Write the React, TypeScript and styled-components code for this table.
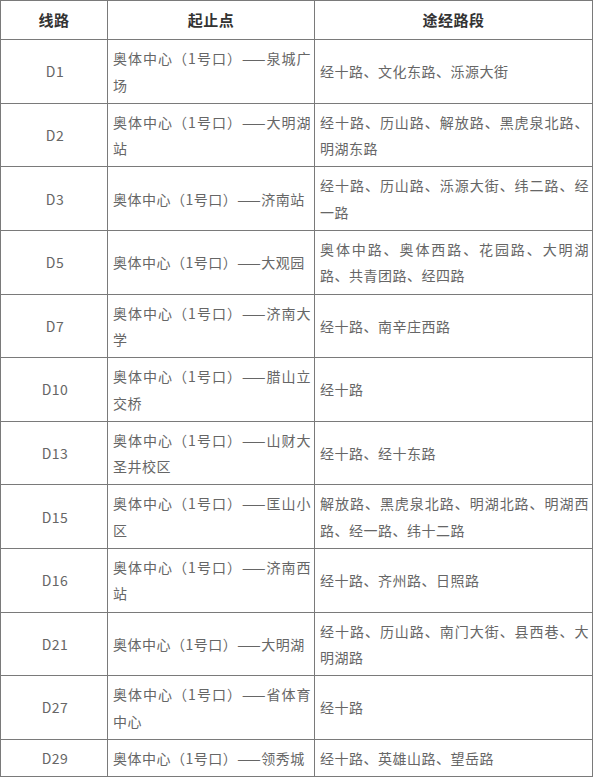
import { createGlobalStyle, styled } from "styled-components";

const GlobalStyle = createGlobalStyle`
  html, body {
    margin: 0;
    padding: 0;
    background: #ffffff;
  }
  body {
    font-family: "Noto Sans CJK SC", "Noto Sans", sans-serif;
  }
`;

const Table = styled.table`
  width: 592px;
  border-collapse: collapse;
  table-layout: fixed;
  font-size: 14px;
  letter-spacing: 0.5px;
  color: #666666;
`;

const HeadCell = styled.th`
  border: 1px solid #7a7a7a;
  padding: 6px 5px;
  line-height: 26.3px;
  font-size: 15px;
  font-weight: bold;
  color: #333333;
  text-align: center;
`;

const Cell = styled.td<{ $center?: boolean }>`
  border: 1px solid #7a7a7a;
  padding: 5px 3px 5px 5px;
  line-height: 26.3px;
  vertical-align: middle;
  text-align: ${(props) => (props.$center ? "center" : "justify")};
  word-break: break-all;
`;

interface IRoute {
  line: string;
  ends: string;
  via: string;
}

const routes: IRoute[] = [
  { line: "D1", ends: "奥体中心（1号口）——泉城广场", via: "经十路、文化东路、泺源大街" },
  { line: "D2", ends: "奥体中心（1号口）——大明湖站", via: "经十路、历山路、解放路、黑虎泉北路、明湖东路" },
  { line: "D3", ends: "奥体中心（1号口）——济南站", via: "经十路、历山路、泺源大街、纬二路、经一路" },
  { line: "D5", ends: "奥体中心（1号口）——大观园", via: "奥体中路、奥体西路、花园路、大明湖路、共青团路、经四路" },
  { line: "D7", ends: "奥体中心（1号口）——济南大学", via: "经十路、南辛庄西路" },
  { line: "D10", ends: "奥体中心（1号口）——腊山立交桥", via: "经十路" },
  { line: "D13", ends: "奥体中心（1号口）——山财大圣井校区", via: "经十路、经十东路" },
  { line: "D15", ends: "奥体中心（1号口）——匡山小区", via: "解放路、黑虎泉北路、明湖北路、明湖西路、经一路、纬十二路" },
  { line: "D16", ends: "奥体中心（1号口）——济南西站", via: "经十路、齐州路、日照路" },
  { line: "D21", ends: "奥体中心（1号口）——大明湖", via: "经十路、历山路、南门大街、县西巷、大明湖路" },
  { line: "D27", ends: "奥体中心（1号口）——省体育中心", via: "经十路" },
  { line: "D29", ends: "奥体中心（1号口）——领秀城", via: "经十路、英雄山路、望岳路" },
];

function App() {
  return (
    <>
      <GlobalStyle />
      <Table>
        <colgroup>
          <col style={{ width: 107 }} />
          <col style={{ width: 207 }} />
          <col style={{ width: 278 }} />
        </colgroup>
        <thead>
          <tr>
            <HeadCell>线路</HeadCell>
            <HeadCell>起止点</HeadCell>
            <HeadCell>途经路段</HeadCell>
          </tr>
        </thead>
        <tbody>
          {routes.map((route) => (
            <tr key={route.line}>
              <Cell $center>{route.line}</Cell>
              <Cell>{route.ends}</Cell>
              <Cell>{route.via}</Cell>
            </tr>
          ))}
        </tbody>
      </Table>
    </>
  );
}

export default App;
